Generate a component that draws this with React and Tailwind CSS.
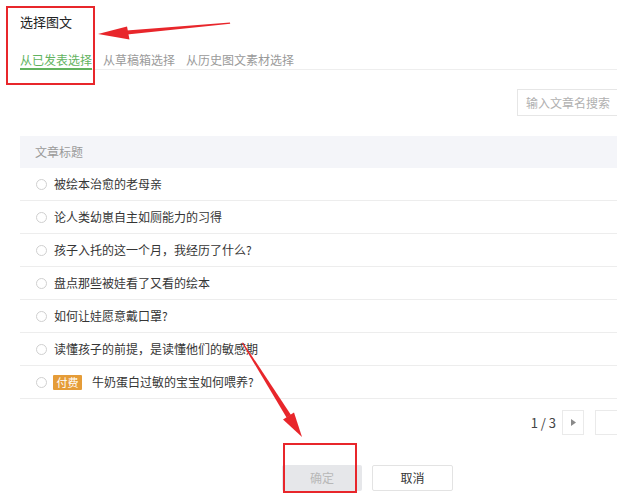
import React from 'react'

const ARTICLES = [
  { id: 1, title: '被绘本治愈的老母亲' },
  { id: 2, title: '论人类幼崽自主如厕能力的习得' },
  { id: 3, title: '孩子入托的这一个月，我经历了什么?' },
  { id: 4, title: '盘点那些被娃看了又看的绘本' },
  { id: 5, title: '如何让娃愿意戴口罩?' },
  { id: 6, title: '读懂孩子的前提，是读懂他们的敏感期' },
  { id: 7, title: '牛奶蛋白过敏的宝宝如何喂养?', paid: true }
]

const TABS = ['从已发表选择', '从草稿箱选择', '从历史图文素材选择']

export default function App() {
  return (
    <div className="relative w-[617px] h-[500px] overflow-hidden bg-white text-[#353535]" style={{ fontFamily: '"Noto Sans CJK SC", "Noto Sans", sans-serif' }}>
      <div className="w-[715px] pl-[20px] pt-[12px]">
        <h1 className="text-[13px] leading-[20px] text-[#222] font-normal">选择图文</h1>

        <div className="mt-[20px] flex border-b border-[#eeeeee]">
          {TABS.map((t, i) => (
            <div key={t}
              className={`-mb-px mr-[11px] text-[12px] leading-[16px] border-b-2 ${i === 0 ? 'text-[#62b35f] border-[#62b35f]' : 'text-[#9a9a9a] border-transparent'}`}>
              {t}
            </div>
          ))}
        </div>

        <div className="mt-[19px] flex justify-end">
          <div className="w-[198px] h-[27px] border border-[#e6e6e6] flex items-center pl-[8px] text-[12px] text-[#b0b0b0]">
            输入文章名搜索
          </div>
        </div>

        <div className="mt-[20px]">
          <div className="h-[32px] bg-[#f4f5f9] flex items-center pl-[15px] text-[12px] text-[#9a9a9a]">文章标题</div>
          {ARTICLES.map(a => (
            <div key={a.id} className="h-[33px] border-b border-[#ededed] flex items-center pl-[16px] text-[12px]">
              <span className="w-[11px] h-[11px] rounded-full border border-[#d0d0d0] shrink-0"></span>
              {a.paid && (
                <span className="ml-[6px] w-[29px] h-[15px] bg-[#e59c38] text-white text-[11px] leading-[15px] text-center rounded-[1px]">付费</span>
              )}
              <span className={a.paid ? 'ml-[10px]' : 'ml-[7px]'}>{a.title}</span>
            </div>
          ))}
        </div>

        <div className="mt-[11px] flex justify-end items-center">
          <span className="text-[13px] text-[#444] mr-[6px]">1 / 3</span>
          <div className="w-[22px] h-[25px] border border-[#eaeaea] flex items-center justify-center">
            <svg width="5" height="7" viewBox="0 0 5 7"><polygon points="0,0 5,3.5 0,7" fill="#8a8a8a" /></svg>
          </div>
          <div className="ml-[11px] w-[120px] h-[25px] border border-[#eaeaea]"></div>
        </div>

        <div className="mt-[30px] flex justify-center gap-[10px]">
          <button className="w-[80px] h-[26px] bg-[#e6e7ea] text-[#b8b8b8] text-[12px] rounded-[2px]">确定</button>
          <button className="w-[81px] h-[26px] bg-white border border-[#e3e3e3] text-[#353535] text-[12px] rounded-[2px]">取消</button>
        </div>
      </div>

      {/* annotation overlays */}
      <div className="absolute left-[6px] top-[6px] w-[89px] h-[79px] border-2 border-[#e8262b]"></div>
      <div className="absolute left-[283px] top-[443px] w-[74px] h-[50px] border-2 border-[#e8262b]"></div>
      <svg className="absolute left-0 top-0 pointer-events-none" width="617" height="500" viewBox="0 0 617 500">
        <polygon points="230,22.5 230.2,23.7 127,34.5 126.5,30.5" fill="#e8262b" />
        <polygon points="98,34 127,26.5 129.5,39.5" fill="#e8262b" />
        <polygon points="242,343 243,342.5 291,415 286.5,417.5" fill="#e8262b" />
        <polygon points="302,437 283,419.5 294,412.5" fill="#e8262b" />
      </svg>
    </div>
  )
}
